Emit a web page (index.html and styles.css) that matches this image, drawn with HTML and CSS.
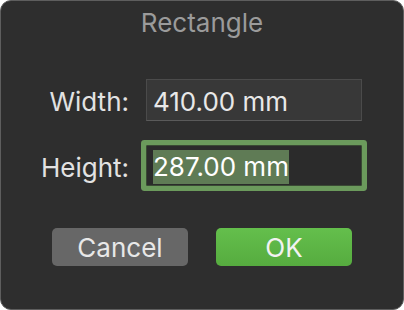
FILE: index.html
```html
<!DOCTYPE html>
<html>
<head>
<meta charset="utf-8">
<link rel="stylesheet" href="styles.css">
</head>
<body>
<div class="window">
  <div class="title">Rectangle</div>
  <div class="form">
    <label class="label">Width:</label>
    <div class="field">410.00 mm</div>
    <label class="label">Height:</label>
    <div class="field field-focus"><span class="sel">287.00 mm</span></div>
  </div>
  <div class="buttons">
    <div class="btn btn-cancel">Cancel</div>
    <div class="btn btn-ok">OK</div>
  </div>
</div>
</body>
</html>
```
FILE: styles.css
```css
html, body {
  margin: 0;
  padding: 0;
  background: #ffffff;
}
body {
  width: 404px;
  height: 310px;
  overflow: hidden;
  font-family: Inter, "Liberation Sans", sans-serif;
}
.window {
  box-sizing: border-box;
  width: 404px;
  height: 310px;
  background: #2e2e2e;
  border: 1px solid #5e5e5e;
  border-radius: 11px;
  padding-top: 7px;
}
.title {
  text-align: center;
  color: #9b9b9b;
  font-size: 26px;
  line-height: 30px;
}
.form {
  display: grid;
  grid-template-columns: 128px 216px;
  grid-template-rows: 42px 41px;
  column-gap: 17px;
  row-gap: 24px;
  margin-top: 41px;
  align-items: start;
}
.label {
  box-sizing: border-box;
  height: 42px;
  text-align: right;
  color: #e2e2e2;
  font-size: 26px;
  line-height: 40px;
  padding-top: 3px;
}
.field {
  box-sizing: border-box;
  height: 42px;
  background: #383838;
  border: 1px solid #4b4b4b;
  border-bottom-color: #5a5a5a;
  color: #e8e8e8;
  font-size: 26px;
  line-height: 38px;
  padding: 3px 0 0 6px;
}
.field-focus {
  height: 41px;
  background: #2b2b2b;
  border: 1px solid #3a4a34;
  box-shadow: 0 0 0 5px #6b9a5c;
  border-radius: 1px;
  color: #ffffff;
  padding-top: 4px;
  line-height: 34px;
}
.sel {
  display: inline-block;
  vertical-align: top;
  background: #5f7b55;
  line-height: 34px;
}
.buttons {
  display: flex;
  justify-content: center;
  gap: 28px;
  margin-top: 42px;
}
.btn {
  box-sizing: border-box;
  width: 136px;
  height: 38px;
  border-radius: 5px;
  text-align: center;
  font-size: 26px;
  line-height: 38px;
  padding-top: 1px;
  color: #e8e8e8;
}
.btn-cancel {
  background: #676767;
}
.btn-ok {
  background: linear-gradient(#64bf4c, #56ac3f);
  color: #f2f2f2;
}
```
